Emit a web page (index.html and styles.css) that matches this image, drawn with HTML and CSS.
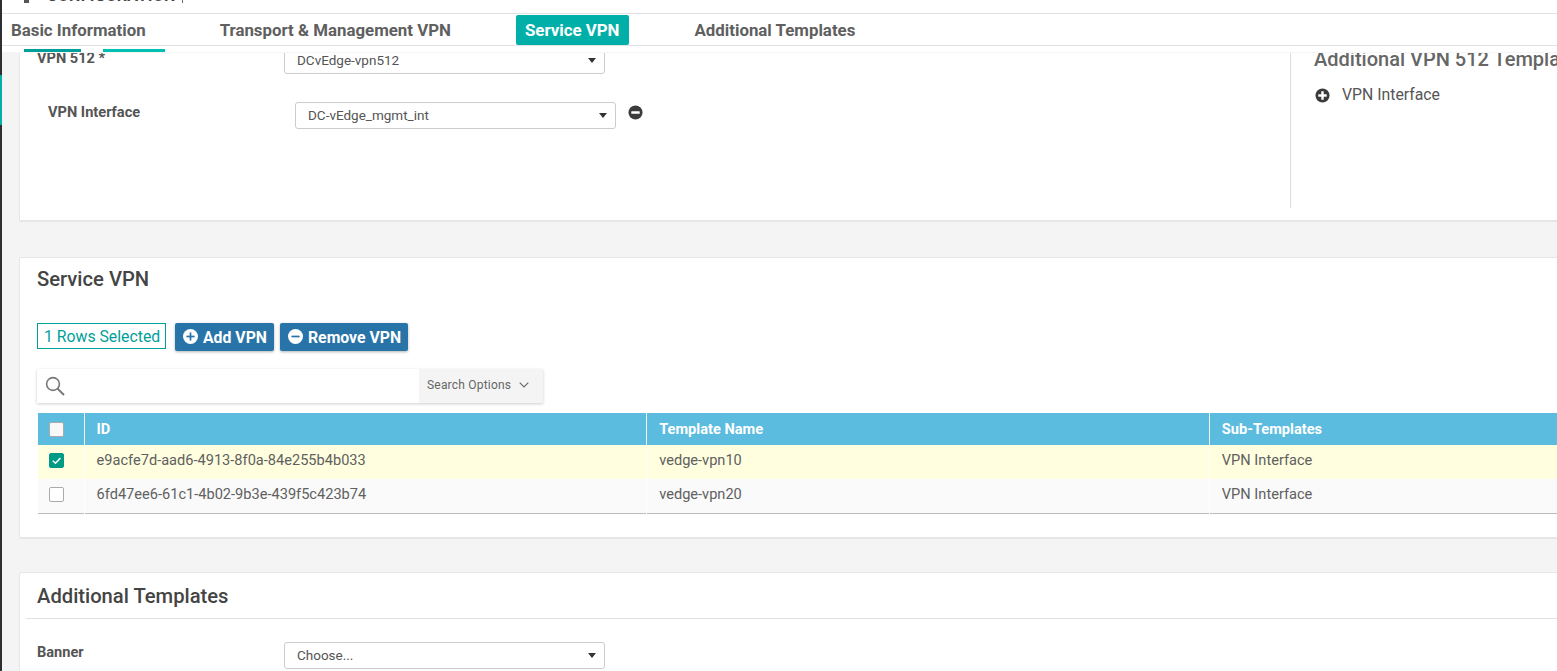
FILE: index.html
```html
<!DOCTYPE html>
<html lang="en">
<head>
<meta charset="utf-8">
<title>Configuration</title>
<link rel="stylesheet" href="styles.css">
</head>
<body>
<div class="app">
  <aside class="rail"><div class="rail-active"></div></aside>
  <main class="main">
    <header class="topbar"><span class="top-icon"></span><span class="top-title">CONFIGURATION</span><span class="top-sep"></span></header>
    <nav class="tabs">
      <a class="tab tab-basic">Basic Information</a>
      <a class="tab tab-transport">Transport &amp; Management VPN</a>
      <a class="tab tab-active">Service VPN</a>
      <a class="tab tab-additional">Additional Templates</a>
    </nav>
    <div class="progress"><span class="prog prog-a"></span><span class="prog prog-b"></span></div>
    <div class="content">
      <section class="card card-mgmt">
        <div class="mgmt-left">
          <div class="form-row">
            <label class="label">VPN 512 *</label>
            <div class="select"><span>DCvEdge-vpn512</span><i class="caret"></i></div>
          </div>
          <div class="form-row sub">
            <label class="label">VPN Interface</label>
            <div class="select"><span>DC-vEdge_mgmt_int</span><i class="caret"></i></div>
            <svg class="round-icon" viewBox="0 0 16 16"><circle cx="8" cy="8" r="7.5" fill="#3b3b3b"/><rect x="3.5" y="6.6" width="9" height="2.8" rx=".6" fill="#fff"/></svg>
          </div>
        </div>
        <div class="mgmt-right">
          <h3 class="side-title">Additional VPN 512 Templates</h3>
          <div class="side-item">
            <svg class="round-icon" viewBox="0 0 16 16"><circle cx="8" cy="8" r="7.5" fill="#3b3b3b"/><rect x="3.5" y="6.7" width="9" height="2.6" fill="#fff"/><rect x="6.7" y="3.5" width="2.6" height="9" fill="#fff"/></svg>
            <span>VPN Interface</span>
          </div>
        </div>
      </section>

      <section class="card card-service">
        <h2 class="card-title">Service VPN</h2>
        <div class="actions">
          <span class="selected">1 Rows Selected</span>
          <button class="btn btn-add">
            <svg class="btn-icon" viewBox="0 0 14 14"><circle cx="7" cy="7" r="7" fill="#fff"/><rect x="3.2" y="6.2" width="7.6" height="1.6" fill="#2874a8"/><rect x="6.2" y="3.2" width="1.6" height="7.6" fill="#2874a8"/></svg>
            Add VPN
          </button>
          <button class="btn">
            <svg class="btn-icon" viewBox="0 0 14 14"><circle cx="7" cy="7" r="7" fill="#fff"/><rect x="3.2" y="6.2" width="7.6" height="1.6" fill="#2874a8"/></svg>
            Remove VPN
          </button>
        </div>
        <div class="search">
          <svg class="search-icon" viewBox="0 0 20 20"><circle cx="8" cy="8" r="6.4" fill="none" stroke="#777" stroke-width="1.6"/><path d="M12.6 12.6 L19 19" stroke="#777" stroke-width="2" fill="none"/></svg>
          <div class="search-input"></div>
          <div class="search-options">Search Options
            <svg class="chev" viewBox="0 0 10 6"><path d="M.7.7 5 5 9.3.7" fill="none" stroke="#666" stroke-width="1.1"/></svg>
          </div>
        </div>
        <table class="grid">
          <colgroup><col class="c-check"><col class="c-col"><col class="c-col"><col class="c-col"></colgroup>
          <thead>
            <tr><th><span class="check"></span></th><th>ID</th><th>Template Name</th><th>Sub-Templates</th></tr>
          </thead>
          <tbody>
            <tr class="row-selected">
              <td><span class="check checked"><svg viewBox="0 0 14 14"><path d="M3 7.2 6 10 11.2 4.2" fill="none" stroke="#fff" stroke-width="1.6"/></svg></span></td>
              <td>e9acfe7d-aad6-4913-8f0a-84e255b4b033</td><td>vedge-vpn10</td><td>VPN Interface</td>
            </tr>
            <tr>
              <td><span class="check"></span></td>
              <td>6fd47ee6-61c1-4b02-9b3e-439f5c423b74</td><td>vedge-vpn20</td><td>VPN Interface</td>
            </tr>
          </tbody>
        </table>
      </section>

      <section class="card card-additional">
        <h2 class="card-title titled">Additional Templates</h2>
        <div class="form-row banner">
          <label class="label">Banner</label>
          <div class="select"><span>Choose...</span><i class="caret"></i></div>
        </div>
      </section>
    </div>
  </main>
</div>
</body>
</html>
```
FILE: styles.css
```css
* { box-sizing: border-box; }
html, body { margin: 0; height: 671px; overflow: hidden; background: #fff; }
body { font-family: Roboto, "Liberation Sans", sans-serif; color: #555; }
.app { display: flex; height: 671px; width: 1557px; overflow: hidden; }
.rail { width: 2px; flex: none; background: #2e2e33; padding-top: 75px; }
.rail-active { height: 50px; background: #00b0a8; }
.main { flex: 1; min-width: 0; display: flex; flex-direction: column; overflow: hidden; }

.topbar { height: 14px; flex: none; border-bottom: 1px solid #e2e2e2; display: flex; align-items: flex-start; padding-left: 22px; overflow: hidden; }
.top-icon { width: 5px; height: 3px; background: #555; flex: none; }
.top-title { font-size: 16px; font-weight: 700; letter-spacing: .3px; color: #444; margin-left: 18px; line-height: 16px; margin-top: -12px; white-space: nowrap; }
.top-sep { width: 1px; height: 3px; background: #666; margin-left: 6px; }

.tabs { height: 32px; flex: none; border-bottom: 1px solid #e2e2e2; display: flex; align-items: flex-start; padding-top: 1px; font-size: 16.85px; font-weight: 700; color: #5f5f5f; }
.tab { white-space: nowrap; line-height: 30px; }
.tab-basic { margin-left: 9px; }
.tab-transport { margin-left: 74px; }
.tab-active { margin-left: 65px; background: #00b0a8; color: #fff; padding: 0 9px; border-radius: 2px; }
.tab-additional { margin-left: 66px; }

.progress { height: 7px; flex: none; display: flex; padding-top: 3px; background: #fff; border-bottom: 1px solid #f6f6f6; position: relative; z-index: 1; }
.prog { height: 3px; display: block; }
.prog-a { width: 57px; margin-left: 22px; background: #00a09a; }
.prog-b { width: 62px; margin-left: 22px; background: #00c0b4; }

.content { flex: 1; min-height: 0; background: #f4f4f4; overflow: hidden; }
.card { width: 1600px; margin-left: 17px; background: #fff; border: 1px solid #e6e6e6; border-bottom-width: 2px; border-radius: 2px; }
.card-mgmt { height: 176px; margin-top: -7px; display: flex; }
.card-service { height: 282px; margin-top: 35px; padding: 0 17px; }
.card-additional { height: 200px; margin-top: 33px; padding-left: 6px; }

.mgmt-left { width: 1271px; height: 161px; flex: none; border-right: 1px solid #ddd; padding-left: 17px; }
.form-row { display: flex; align-items: flex-start; }
.label { width: 247px; flex: none; font-size: 14.6px; font-weight: 700; color: #555; line-height: 16px; padding-top: 3px; }
.form-row.sub { margin-top: 28px; padding-left: 11px; }
.form-row.sub .label { padding-top: 2px; }
.select { width: 321px; height: 27px; border: 1px solid #ccc; border-radius: 3px; display: flex; align-items: center; justify-content: space-between; padding: 0 8px 1px 12px; font-size: 13.5px; color: #555; background: #fff; flex: none; }
.caret { width: 0; height: 0; border-left: 4.5px solid transparent; border-right: 4.5px solid transparent; border-top: 5px solid #333; }
.round-icon { width: 15px; height: 15px; flex: none; }
.form-row.sub .round-icon { margin: 3px 0 0 12px; }

.mgmt-right { padding-left: 23px; }
.side-title { margin: 0; font-size: 20px; font-weight: 500; color: #666; line-height: 22px; padding-top: 1px; white-space: nowrap; }
.side-item { display: flex; align-items: center; gap: 12px; margin-top: 15px; padding-left: 1px; font-size: 15.8px; color: #555; line-height: 20px; }

.card-title { margin: 0; font-size: 20.2px; font-weight: 500; color: #444; line-height: 24px; padding-top: 9px; height: 65px; }
.card-title.titled { height: 46px; padding-top: 11px; }
.card-additional .card-title { margin-left: 0; padding-left: 11px; border-bottom: 1px solid #e2e2e2; }

.actions { display: flex; align-items: flex-start; height: 46px; }
.selected { width: 129px; height: 26px; border: 1px solid #00a09a; color: #00a09a; font-size: 15.8px; line-height: 25px; padding-left: 6px; white-space: nowrap; flex: none; }
.btn { height: 28px; border: 0; border-radius: 2px; background: #2874a8; color: #fff; font: 700 15.8px Roboto, sans-serif; display: flex; align-items: center; gap: 5px; padding: 0 7px 0 8px; margin-left: 6px; box-shadow: 0 1px 3px rgba(0,0,0,.3); white-space: nowrap; }
.btn-add { margin-left: 9px; }
.btn-icon { width: 15px; height: 15px; flex: none; margin-top: -2px; }

.search { width: 506px; height: 34px; display: flex; align-items: center; box-shadow: 0 1px 3px rgba(0,0,0,.2); background: #fff; }
.search-icon { width: 20px; height: 20px; margin-left: 8px; flex: none; }
.search-input { flex: 1; }
.search-options { width: 124px; height: 34px; background: #f4f4f4; font-size: 12px; letter-spacing: .2px; color: #666; display: flex; align-items: center; padding: 0 0 2px 8px; gap: 8px; white-space: nowrap; }
.chev { width: 10px; height: 6px; }

.grid { margin: 10px 0 0 1px; width: 1734px; border-collapse: collapse; table-layout: fixed; font-size: 14.6px; border-bottom: 1px solid #bbb; }
.c-check { width: 46px; }
.c-col { width: 562px; }
.grid th { height: 32px; background: #5bbcdf; color: #fff; text-align: left; font-weight: 700; padding: 0 12px; border-left: 1px solid #f2f2f2; }
.grid th:first-child, .grid td:first-child { border-left: 0; padding: 0 0 0 11px; }
.grid td { height: 34px; padding: 0 12px 4px; border-left: 1px solid #fff; color: #606060; background: #fafafa; }
.grid td:first-child { padding-bottom: 3px; }
.grid .row-selected td { background: #ffffdf; }
.check { display: block; width: 15px; height: 15px; border: 1px solid #aaa; border-radius: 2px; background: #fff; }
th .check { background: #f8f8f8; }
.check.checked { background: #009a85; border-color: #009a85; }
.check svg { display: block; width: 13px; height: 13px; }

.banner { margin-top: 23px; padding-left: 11px; }
.banner .label { padding-top: 2px; }
```
